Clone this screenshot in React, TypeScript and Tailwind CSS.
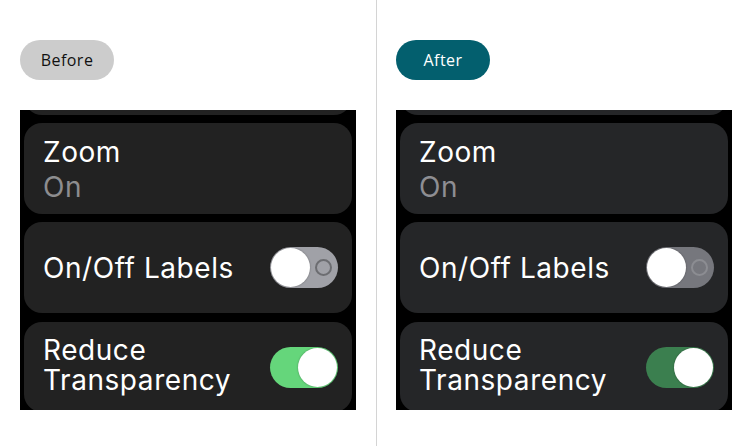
type Variant = "before" | "after";

const palette = {
  before: {
    card: "bg-[#222222]",
    sub: "text-[#8d8d8f]",
    offTrack: "bg-[#a0a1a7]",
    ring: "border-[#6c6d71]",
    onTrack: "bg-[#65d67b]",
  },
  after: {
    card: "bg-[#252628]",
    sub: "text-[#8e8e93]",
    offTrack: "bg-[#76777d]",
    ring: "border-[#8c8d92]",
    onTrack: "bg-[#3b7f4f]",
  },
};

const Toggle = ({ on, variant }: { on: boolean; variant: Variant }) => {
  const c = palette[variant];
  if (on) {
    return (
      <div className={`flex h-[41px] w-[68px] shrink-0 items-center justify-end rounded-full px-[1px] ${c.onTrack}`}>
        <div className="h-[39px] w-[39px] rounded-full bg-white shadow-[0_0_2px_rgba(0,0,0,0.35)]"></div>
      </div>
    );
  }
  return (
    <div className={`flex h-[41px] w-[68px] shrink-0 items-center justify-between rounded-full pl-[1px] pr-[6px] ${c.offTrack}`}>
      <div className="h-[39px] w-[39px] rounded-full bg-white shadow-[0_0_2px_rgba(0,0,0,0.35)]"></div>
      <div className={`h-[17px] w-[17px] rounded-full border-2 ${c.ring}`}></div>
    </div>
  );
};

const WatchScreen = ({ variant }: { variant: Variant }) => {
  const c = palette[variant];
  return (
    <div
      className="flex h-[300px] w-[336px] flex-col overflow-hidden bg-black px-1 text-white tracking-[0.035em]"
      style={{ fontFamily: "Inter, 'Open Sans', sans-serif" }}
    >
      {/* previous row, scrolled almost out of view */}
      <div className={`-mt-[86px] h-[91px] shrink-0 rounded-[18px] ${c.card}`}></div>

      <div className={`mt-2 h-[91px] shrink-0 rounded-[18px] pl-[19px] pt-[12px] ${c.card}`}>
        <div className="text-[28px] leading-[35px]">Zoom</div>
        <div className={`text-[28px] leading-[35px] ${c.sub}`}>On</div>
      </div>

      <div className={`mt-2 flex h-[91px] shrink-0 items-center justify-between rounded-[18px] pl-[19px] pr-[14px] ${c.card}`}>
        <div className="text-[28px] leading-[32px]">On/Off Labels</div>
        <Toggle on={false} variant={variant} />
      </div>

      <div className={`mt-[9px] flex h-[90px] shrink-0 items-center justify-between rounded-[18px] pl-[19px] pr-[14px] ${c.card}`}>
        <div className="mb-[4px] text-[28px] leading-[30px]">
          <div>Reduce</div>
          <div>Transparency</div>
        </div>
        <Toggle on={true} variant={variant} />
      </div>
    </div>
  );
};

export default function App() {
  return (
    <div
      className="flex h-[446px] w-[752px] bg-white"
      style={{ fontFamily: "'Open Sans', sans-serif" }}
    >
      <div className="w-[377px] border-r border-[#d4d4d4] pl-5 pt-10">
        <div className="flex h-10 w-[94px] items-center justify-center rounded-full bg-[#cccccc] text-[16px] tracking-[0.03em] text-[#111111]">
          Before
        </div>
        <div className="mt-[30px]">
          <WatchScreen variant="before" />
        </div>
      </div>
      <div className="flex-1 pl-[19px] pt-10">
        <div className="flex h-10 w-[94px] items-center justify-center rounded-full bg-[#035f6e] text-[16px] font-medium tracking-[0.03em] text-white">
          After
        </div>
        <div className="mt-[30px]">
          <WatchScreen variant="after" />
        </div>
      </div>
    </div>
  );
}
